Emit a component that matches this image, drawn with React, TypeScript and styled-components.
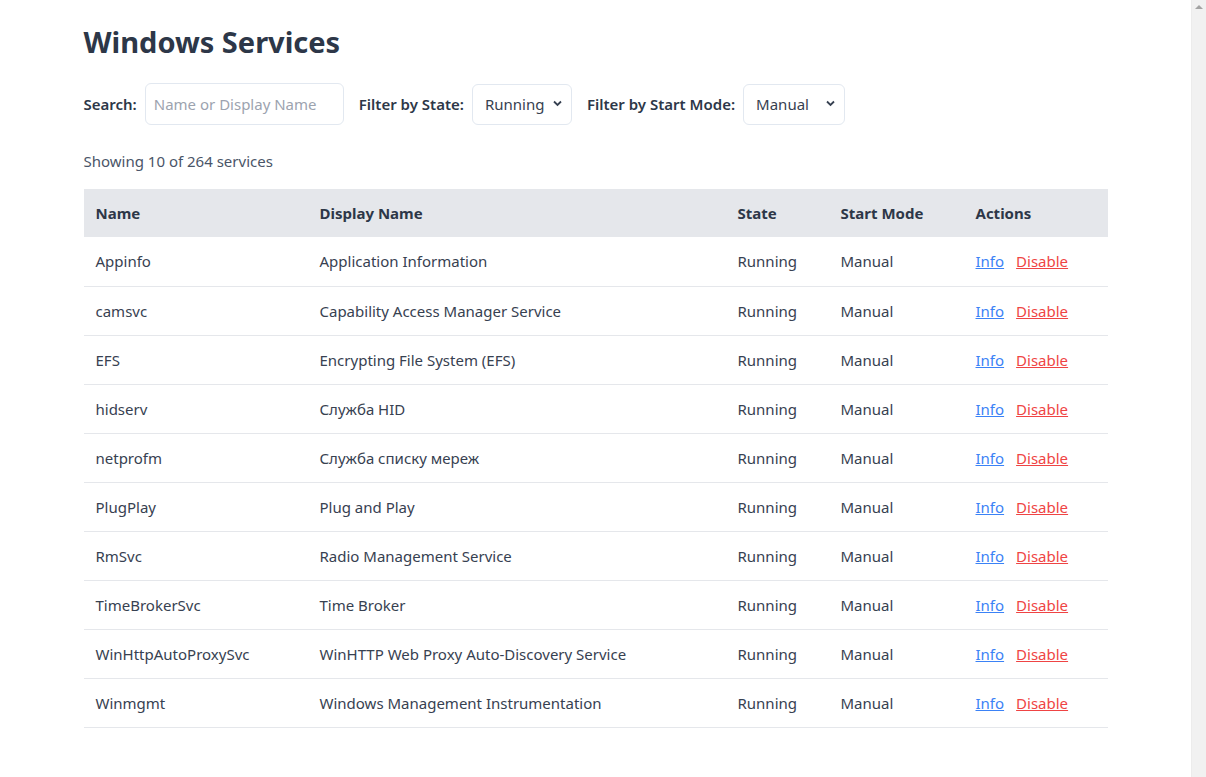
import React, { useState } from "react";
import styled, { createGlobalStyle } from "styled-components";

const GlobalStyle = createGlobalStyle`
  body {
    margin: 0;
    background: #ffffff;
    font-family: "Noto Sans", "Open Sans", Arial, sans-serif;
    color: #374151;
  }
  * { box-sizing: border-box; }
`;

const Shell = styled.div`
  display: flex;
  min-height: 100vh;
`;

const Main = styled.main`
  flex: 1;
  min-width: 0;
`;

const ScrollTrack = styled.div`
  width: 15px;
  flex: none;
  background: #f1f1f1;
  border-left: 1px solid #ececec;
  display: flex;
  justify-content: center;
  padding-top: 5px;
`;

const Page = styled.div`
  max-width: 1024px;
  margin: 0 auto;
  padding: 22px 0 40px;
`;

const Title = styled.h1`
  margin: 0 0 21px;
  font-size: 29px;
  line-height: 40px;
  font-weight: 700;
  color: #2d3748;
`;

const Filters = styled.div`
  display: flex;
  align-items: center;
  gap: 15px;
  margin-bottom: 26px;
`;

const Field = styled.label`
  display: flex;
  align-items: center;
  gap: 8px;
  font-size: 15px;
  font-weight: 600;
  color: #2d3748;
`;

const TextInput = styled.input`
  width: 199px;
  height: 42px;
  padding: 0 8px;
  border: 1px solid #e2e8f0;
  border-radius: 6px;
  font-family: inherit;
  font-size: 15px;
  color: #374151;
  outline: none;
  &::placeholder { color: #9ca3af; }
`;

const SelectWrap = styled.div`
  position: relative;
  display: flex;
`;

const Select = styled.select<{ $w: number }>`
  appearance: none;
  -webkit-appearance: none;
  width: ${(p) => p.$w}px;
  height: 41px;
  padding: 0 20px 0 12px;
  border: 1px solid #e2e8f0;
  border-radius: 6px;
  background: #ffffff;
  font-family: inherit;
  font-size: 15px;
  color: #374151;
  outline: none;
`;

const Chevron = styled.svg`
  position: absolute;
  right: 10px;
  top: 50%;
  margin-top: -4px;
  width: 9px;
  height: 7px;
  pointer-events: none;
`;

const Count = styled.div`
  font-size: 15px;
  color: #4a5568;
  margin-bottom: 18px;
`;

const Table = styled.table`
  width: 100%;
  border-collapse: collapse;
  font-size: 15px;
`;

const Th = styled.th<{ $w?: number }>`
  text-align: left;
  background: #e5e7eb;
  height: 48px;
  padding: 0 12px;
  font-weight: 700;
  color: #2d3748;
  ${(p) => (p.$w ? `width: ${p.$w}px;` : "")}
`;

const Td = styled.td`
  height: 49px;
  padding: 0 12px;
  border-bottom: 1px solid #e5e7eb;
  color: #374151;
`;

const Actions = styled.div`
  display: flex;
  gap: 12px;
`;

const Link = styled.a<{ $danger?: boolean }>`
  color: ${(p) => (p.$danger ? "#ef4444" : "#3b82f6")};
  text-decoration: underline;
  cursor: pointer;
`;

const UpArrow = styled.div`
  width: 0;
  height: 0;
  border-left: 4px solid transparent;
  border-right: 4px solid transparent;
  border-bottom: 4px solid #a3a3a3;
`;

const services = [
  ["Appinfo", "Application Information"],
  ["camsvc", "Capability Access Manager Service"],
  ["EFS", "Encrypting File System (EFS)"],
  ["hidserv", "Служба HID"],
  ["netprofm", "Служба списку мереж"],
  ["PlugPlay", "Plug and Play"],
  ["RmSvc", "Radio Management Service"],
  ["TimeBrokerSvc", "Time Broker"],
  ["WinHttpAutoProxySvc", "WinHTTP Web Proxy Auto-Discovery Service"],
  ["Winmgmt", "Windows Management Instrumentation"],
];

function ChevronIcon() {
  return (
    <Chevron viewBox="0 0 9 7">
      <path d="M1 1.5 L4.5 5 L8 1.5" fill="none" stroke="#374151" strokeWidth="1.8" />
    </Chevron>
  );
}

export default function App() {
  const [q, setQ] = useState("");
  return (
    <>
      <GlobalStyle />
      <Shell>
        <Main>
          <Page>
            <Title>Windows Services</Title>
            <Filters>
              <Field>
                Search:
                <TextInput
                  placeholder="Name or Display Name"
                  value={q}
                  onChange={(e) => setQ(e.target.value)}
                />
              </Field>
              <Field>
                Filter by State:
                <SelectWrap>
                  <Select $w={100} defaultValue="Running">
                    <option>All</option>
                    <option>Running</option>
                    <option>Stopped</option>
                  </Select>
                  <ChevronIcon />
                </SelectWrap>
              </Field>
              <Field>
                Filter by Start Mode:
                <SelectWrap>
                  <Select $w={102} defaultValue="Manual">
                    <option>All</option>
                    <option>Auto</option>
                    <option>Manual</option>
                    <option>Disabled</option>
                  </Select>
                  <ChevronIcon />
                </SelectWrap>
              </Field>
            </Filters>
            <Count>Showing 10 of 264 services</Count>
            <Table>
              <thead>
                <tr>
                  <Th $w={224}>Name</Th>
                  <Th $w={418}>Display Name</Th>
                  <Th $w={103}>State</Th>
                  <Th $w={135}>Start Mode</Th>
                  <Th>Actions</Th>
                </tr>
              </thead>
              <tbody>
                {services.map(([n, d]) => (
                  <tr key={n}>
                    <Td>{n}</Td>
                    <Td>{d}</Td>
                    <Td>Running</Td>
                    <Td>Manual</Td>
                    <Td>
                      <Actions>
                        <Link>Info</Link>
                        <Link $danger>Disable</Link>
                      </Actions>
                    </Td>
                  </tr>
                ))}
              </tbody>
            </Table>
          </Page>
        </Main>
        <ScrollTrack>
          <UpArrow />
        </ScrollTrack>
      </Shell>
    </>
  );
}
